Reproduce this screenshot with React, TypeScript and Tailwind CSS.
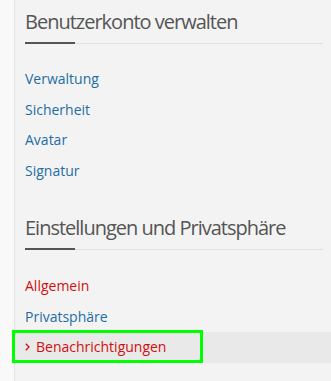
import React from "react";

function Heading({ title, className = "" }: { title: string; className?: string }) {
  return (
    <div className={className}>
      <h2 className="px-[10px] text-[20px] leading-[28px] tracking-[-1px] text-[#555555] font-normal">{title}</h2>
      <div className="mt-[6px] flex items-end pl-[10px] pr-[8px]">
        <div className="h-[2px] w-[50px] bg-[#555555]" />
        <div className="h-[2px] flex-1 border-b border-[#e0e0e0]" />
      </div>
    </div>
  );
}

function Item({ label, color = "blue", active = false }: { label: string; color?: "blue" | "red"; active?: boolean }) {
  const c = color === "red" ? "text-[#d20f0f]" : "text-[#1f6da3]";
  return (
    <div className={`relative flex h-[30.5px] items-center pl-[10px] text-[14px] leading-[30.5px] ${c} ${active ? "bg-[#e9e9e9]" : ""}`}>
      {active && (
        <svg width="5" height="8" viewBox="0 0 5 8" className="mr-[6px] shrink-0">
          <path d="M0.8 0.8 L4 4 L0.8 7.2" fill="none" stroke="#d20f0f" strokeWidth="1.3" />
        </svg>
      )}
      <span>{label}</span>
      {active && (
        <div className="pointer-events-none absolute left-[-3px] top-[-2px] h-[33px] w-[191px] border-[3px] border-[#00ff00]" />
      )}
    </div>
  );
}

export default function App() {
  return (
    <div
      className="flex h-[381px] w-[331px] overflow-hidden bg-[#f3f3f3]"
      style={{ fontFamily: '"Open Sans", "Noto Sans", sans-serif' }}
    >
      <div className="w-[15px] shrink-0 border-r border-[#e4e4e4] bg-[#f9f9f9]" />
      <div className="flex-1 pt-[8px]">
        <Heading title="Benutzerkonto verwalten" />
        <div className="mt-[20px]">
          <Item label="Verwaltung" />
          <Item label="Sicherheit" />
          <Item label="Avatar" />
          <Item label="Signatur" />
        </div>
        <Heading title="Einstellungen und Privatsphäre" className="mt-[28px]" />
        <div className="mt-[21px]">
          <Item label="Allgemein" color="red" />
          <Item label="Privatsphäre" />
          <Item label="Benachrichtigungen" color="red" active />
        </div>
      </div>
    </div>
  );
}
